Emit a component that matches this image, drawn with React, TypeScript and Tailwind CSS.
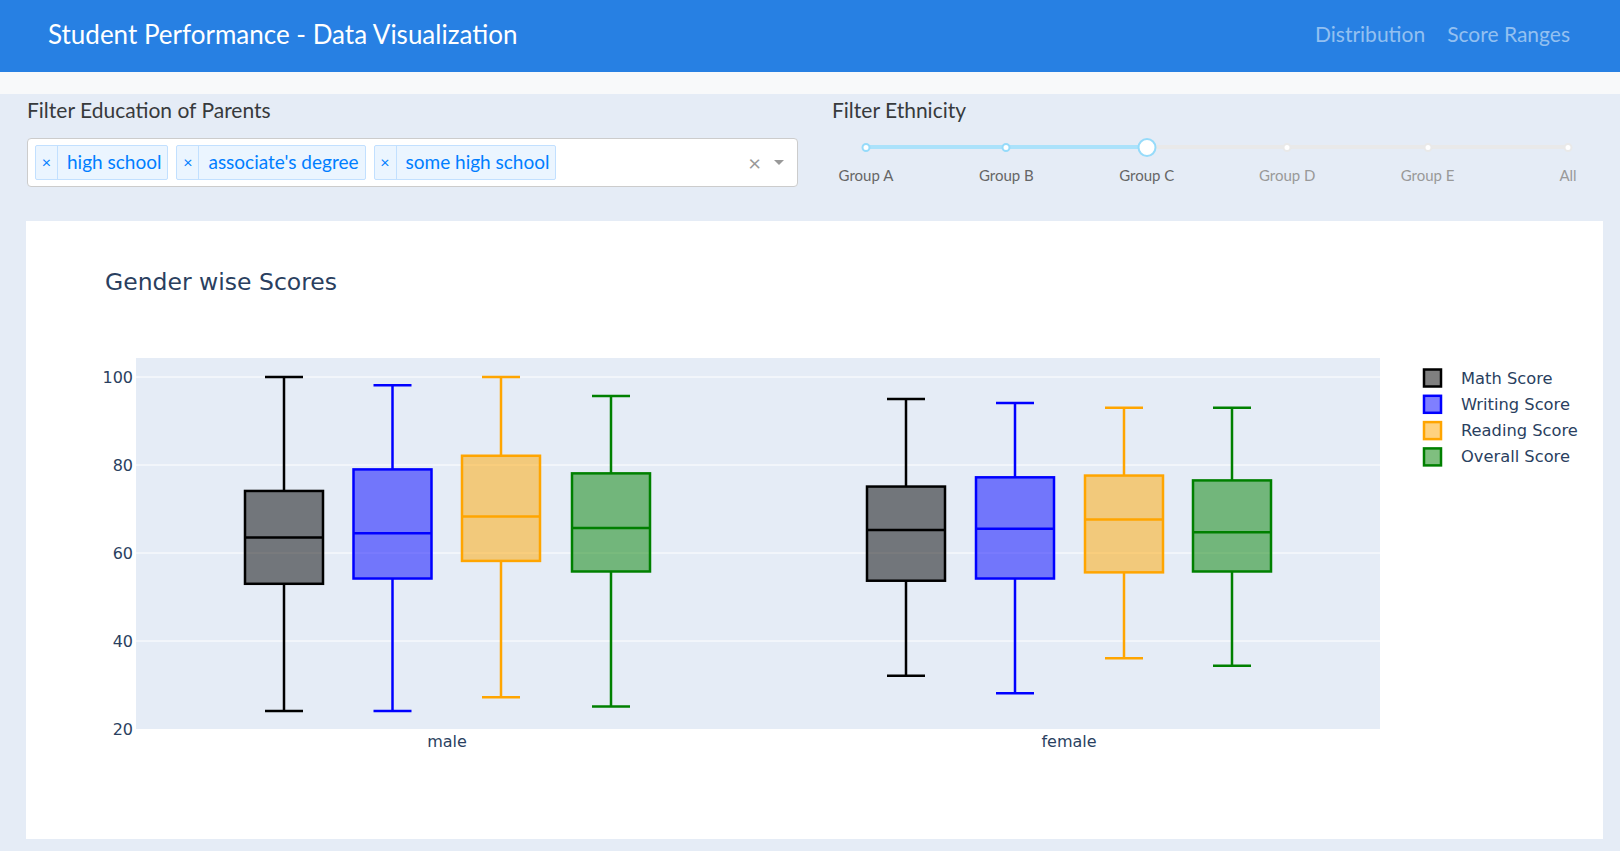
import React from "react";

type Box = { cx: number; min: number; q1: number; med: number; q3: number; max: number; color: string };

const Y = (v: number) => 508 - (v - 20) * 4.4;

const COLORS = { math: "#000000", writing: "#0000ff", reading: "#ffa500", overall: "#008000" };

const boxes: Box[] = [
  { cx: 258, min: 24.1, q1: 53, med: 63.5, q3: 74.1, max: 100, color: COLORS.math },
  { cx: 366.5, min: 24.1, q1: 54.2, med: 64.5, q3: 79, max: 98.1, color: COLORS.writing },
  { cx: 475, min: 27.2, q1: 58.2, med: 68.3, q3: 82.1, max: 100, color: COLORS.reading },
  { cx: 585, min: 25.1, q1: 55.8, med: 65.7, q3: 78.1, max: 95.7, color: COLORS.overall },
  { cx: 880, min: 32.1, q1: 53.7, med: 65.2, q3: 75.1, max: 95, color: COLORS.math },
  { cx: 989, min: 28.1, q1: 54.2, med: 65.5, q3: 77.2, max: 94.1, color: COLORS.writing },
  { cx: 1098, min: 36.1, q1: 55.6, med: 67.6, q3: 77.6, max: 93, color: COLORS.reading },
  { cx: 1206, min: 34.4, q1: 55.8, med: 64.7, q3: 76.5, max: 93, color: COLORS.overall },
];

const legend = [
  { label: "Math Score", color: COLORS.math },
  { label: "Writing Score", color: COLORS.writing },
  { label: "Reading Score", color: COLORS.reading },
  { label: "Overall Score", color: COLORS.overall },
];

function Chart() {
  const bw = 78;
  const cw = 38;
  const font = "'DejaVu Sans', Verdana, sans-serif";
  return (
    <svg width={1577} height={618} viewBox="0 0 1577 618" style={{ display: "block" }}>
      <text x={79} y={69} fontFamily={font} fontSize={23.5} fill="#2a3f5f">
        Gender wise Scores
      </text>
      <rect x={110} y={137} width={1244} height={371} fill="#e5ecf6" />
      {[40, 60, 80, 100].map((v) => (
        <line key={v} x1={110} x2={1354} y1={Y(v)} y2={Y(v)} stroke="#ffffff" strokeWidth={1} />
      ))}
      {[20, 40, 60, 80, 100].map((v) => (
        <text key={v} x={107} y={Y(v) + 5.5} textAnchor="end" fontFamily={font} fontSize={16} fill="#2a3f5f">
          {v}
        </text>
      ))}
      <text x={421} y={526} textAnchor="middle" fontFamily={font} fontSize={16} fill="#2a3f5f">
        male
      </text>
      <text x={1043} y={526} textAnchor="middle" fontFamily={font} fontSize={16} fill="#2a3f5f">
        female
      </text>
      {boxes.map((b, i) => (
        <g key={i} stroke={b.color} strokeWidth={2.5} fill="none">
          <line x1={b.cx} x2={b.cx} y1={Y(b.max)} y2={Y(b.q3)} />
          <line x1={b.cx} x2={b.cx} y1={Y(b.q1)} y2={Y(b.min)} />
          <line x1={b.cx - cw / 2} x2={b.cx + cw / 2} y1={Y(b.max)} y2={Y(b.max)} />
          <line x1={b.cx - cw / 2} x2={b.cx + cw / 2} y1={Y(b.min)} y2={Y(b.min)} />
          <rect
            x={b.cx - bw / 2}
            y={Y(b.q3)}
            width={bw}
            height={Y(b.q1) - Y(b.q3)}
            fill={b.color}
            fillOpacity={0.5}
          />
          <line x1={b.cx - bw / 2} x2={b.cx + bw / 2} y1={Y(b.med)} y2={Y(b.med)} />
        </g>
      ))}
      {legend.map((l, i) => {
        const cy = 157 + i * 26.3;
        return (
          <g key={l.label}>
            <rect
              x={1398}
              y={cy - 8.5}
              width={17}
              height={17}
              fill={l.color}
              fillOpacity={0.5}
              stroke={l.color}
              strokeWidth={2.5}
            />
            <text x={1435} y={cy + 5.5} fontFamily={font} fontSize={16.3} fill="#2a3f5f">
              {l.label}
            </text>
          </g>
        );
      })}
    </svg>
  );
}

function Tag({ label }: { label: string }) {
  return (
    <div className="flex h-[35px] items-stretch rounded-[2px] border border-[#c2e0ff] bg-[#ebf5ff] text-[#007eff]">
      <span className="flex w-[22px] items-center justify-center border-r border-[#c2e0ff] pb-[2px] text-[16px] leading-none">
        ×
      </span>
      <span className="flex items-center pl-[9px] pr-[6px] text-[19px]">{label}</span>
    </div>
  );
}

const marks = ["Group A", "Group B", "Group C", "Group D", "Group E", "All"];

function Slider() {
  const step = 140.4;
  return (
    <div className="relative h-[49px] w-[702px]">
      <div className="absolute left-0 right-0 top-[7px] h-[4px] rounded-full bg-[#e9e9e9]" />
      <div className="absolute left-0 top-[7px] h-[4px] w-[281px] rounded-full bg-[#abe2fb]" />
      {marks.map((m, i) => {
        const x = i * step;
        const active = i <= 2;
        return (
          <React.Fragment key={m}>
            {i !== 2 && (
              <div
                className={
                  active
                    ? "absolute top-[5px] h-[9px] w-[9px] -translate-x-1/2 rounded-full border-2 border-[#96dbfa] bg-white"
                    : "absolute top-[5px] h-[9px] w-[9px] -translate-x-1/2 rounded-full border-2 border-[#e9e9e9] bg-white"
                }
                style={{ left: x }}
              />
            )}
            <div
              className={
                active
                  ? "absolute top-[27px] -translate-x-1/2 whitespace-nowrap text-[15px] leading-[20px] text-[#666]"
                  : "absolute top-[27px] -translate-x-1/2 whitespace-nowrap text-[15px] leading-[20px] text-[#999]"
              }
              style={{ left: x }}
            >
              {m}
            </div>
          </React.Fragment>
        );
      })}
      <div
        className="absolute top-0 h-[19px] w-[19px] -translate-x-1/2 rounded-full border-2 border-[#96dbfa] bg-white"
        style={{ left: 2 * step }}
      />
    </div>
  );
}

export default function App() {
  return (
    <div className="min-h-screen bg-[#e5ecf6]" style={{ fontFamily: "Lato, 'Noto Sans', sans-serif" }}>
      <header className="flex h-[72px] items-center justify-between bg-[#2780e3] pb-[4px] pl-[48px] pr-[50px]">
        <div className="text-[26px] text-white">Student Performance - Data Visualization</div>
        <nav className="flex gap-[22px] text-[21px] text-[#93c0f1]">
          <span>Distribution</span>
          <span>Score Ranges</span>
        </nav>
      </header>
      <div className="h-[22px] bg-[#f8f9fa]" />
      <div className="flex pl-[27px] pt-[2px]">
        <div className="w-[771px]">
          <div className="h-[28px] text-[21px] leading-[28px] text-[#373a3c]">Filter Education of Parents</div>
          <div className="mt-[14px] flex h-[49px] items-center rounded-[4px] border border-[#ccc] bg-white pl-[7px] pr-[13px]">
            <div className="flex flex-1 gap-[8px]">
              <Tag label="high school" />
              <Tag label="associate's degree" />
              <Tag label="some high school" />
            </div>
            <span className="text-[22px] leading-none text-[#999]">×</span>
            <span className="ml-[13px] h-0 w-0 border-x-[5px] border-t-[5px] border-x-transparent border-t-[#999]" />
          </div>
        </div>
        <div className="ml-[34px]">
          <div className="h-[28px] text-[21px] leading-[28px] text-[#373a3c]">Filter Ethnicity</div>
          <div className="ml-[34px] mt-[14px]">
            <Slider />
          </div>
        </div>
      </div>
      <div className="ml-[26px] mr-[17px] mt-[34px] bg-white">
        <Chart />
      </div>
    </div>
  );
}
